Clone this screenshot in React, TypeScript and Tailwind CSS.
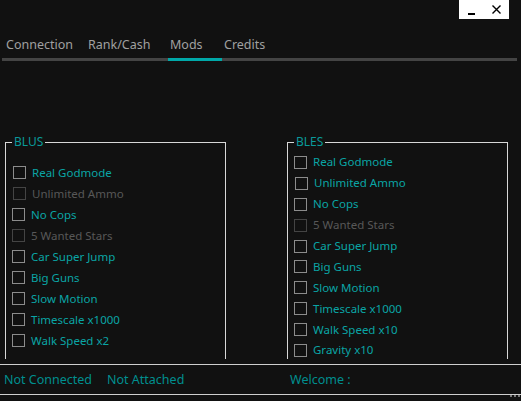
import React from 'react';

type Mod = { label: string; disabled?: boolean; nudge?: string };

const blus: Mod[] = [
  { label: 'Real Godmode', nudge: 'ml-[1px]' },
  { label: 'Unlimited Ammo', disabled: true, nudge: 'ml-[1px]' },
  { label: 'No Cops' },
  { label: '5 Wanted Stars', disabled: true },
  { label: 'Car Super Jump' },
  { label: 'Big Guns' },
  { label: 'Slow Motion' },
  { label: 'Timescale x1000' },
  { label: 'Walk Speed x2' },
];

const bles: Mod[] = [
  { label: 'Real Godmode' },
  { label: 'Unlimited Ammo', nudge: 'ml-[1px]' },
  { label: 'No Cops' },
  { label: '5 Wanted Stars', disabled: true },
  { label: 'Car Super Jump' },
  { label: 'Big Guns' },
  { label: 'Slow Motion' },
  { label: 'Timescale x1000' },
  { label: 'Walk Speed x10' },
  { label: 'Gravity x10' },
];

const tabs = [
  { label: 'Connection', cls: 'w-[82px] pl-[4px]' },
  { label: 'Rank/Cash', cls: 'w-[84px] pl-[4px]' },
  { label: 'Mods', cls: 'w-[54px] pl-[2px]', active: true },
  { label: 'Credits', cls: 'w-[60px] pl-[2px]' },
];

function ModRow({ mod, row }: { mod: Mod; row: string }) {
  return (
    <label className={`flex items-center gap-[6px] ${row} ${mod.nudge ?? ''}`}>
      <span
        className={`block w-[13px] h-[13px] border ${
          mod.disabled ? 'border-[#444]' : 'border-[#8c8c8c]'
        }`}
      />
      <span className={mod.disabled ? 'text-[#585858]' : 'text-[#0aa5a5]'}>{mod.label}</span>
    </label>
  );
}

function Group({ title, mods, pad, row }: { title: string; mods: Mod[]; pad: string; row: string }) {
  return (
    <fieldset className="w-[221px] h-[224px] border border-b-0 border-[#d8d8d8] px-[5px] m-0">
      <legend className="ml-[1px] px-[2px] text-[12px] leading-[14px] text-[#0a9a9a]">{title}</legend>
      <div className={pad}>
        {mods.map((m) => (
          <ModRow key={m.label} mod={m} row={row} />
        ))}
      </div>
    </fieldset>
  );
}

export default function App() {
  return (
    <div
      className="relative w-[521px] h-[401px] overflow-hidden bg-[#111111] text-[11.5px] leading-[14px]"
      style={{ fontFamily: '"Noto Sans", "Open Sans", sans-serif' }}
    >
      {/* title buttons */}
      <div className="flex justify-end pr-[12px]">
        <div className="flex w-[50px] h-[19px] bg-white text-black">
          <span className="w-[25px] flex justify-center items-end pb-[4px]">
            <span className="block w-[7px] h-[2px] bg-black" />
          </span>
          <span className="w-[25px] flex justify-center items-center">
            <svg width="9" height="9" viewBox="0 0 9 9">
              <path d="M0.5 0.5 L8.5 8.5 M8.5 0.5 L0.5 8.5" stroke="#000" strokeWidth="1.4" />
            </svg>
          </span>
        </div>
      </div>

      {/* tabs */}
      <div className="mt-[16px] px-[2px]">
        <div className="flex h-[19px] items-center text-[12.5px] text-[#a0a0a0]">
          {tabs.map((t) => (
            <span key={t.label} className={t.cls}>
              {t.label}
            </span>
          ))}
        </div>
        <div className="flex mt-[4px] w-[515px] h-[3px] bg-[#444]">
          <span className="ml-[166px] w-[54px] h-[3px] bg-[#00a8a8]" />
        </div>
      </div>

      {/* groups */}
      <div className="flex gap-[61px] pl-[5px] mt-[74px]">
        <Group title="BLUS" mods={blus} pad="pt-[13px] pl-[1px]" row="h-[21px]" />
        <Group title="BLES" mods={bles} pad="pt-[3px] pl-[1px]" row="h-[20.9px]" />
      </div>

      {/* status bar */}
      <div className="mt-[5px] h-[31px] border-y border-[#cfcfcf] flex items-center text-[12.5px] text-[#008f8f]">
        <span className="ml-[4px] w-[103px]">Not Connected</span>
        <span className="w-[183px]">Not Attached</span>
        <span>Welcome :</span>
      </div>

      <div className="absolute right-[1px] bottom-[4px] flex gap-[2px]">
        <span className="w-[2px] h-[2px] bg-[#777]" />
        <span className="w-[2px] h-[2px] bg-[#777]" />
        <span className="w-[2px] h-[2px] bg-[#777]" />
      </div>
    </div>
  );
}
